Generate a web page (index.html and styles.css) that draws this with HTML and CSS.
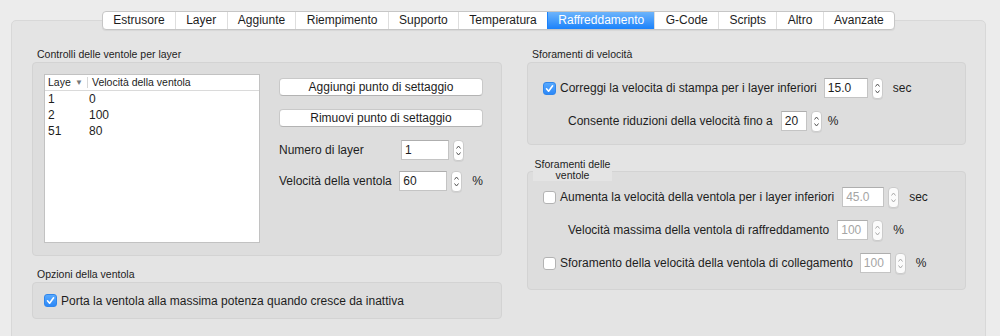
FILE: index.html
```html
<!DOCTYPE html>
<html lang="it">
<head>
    <meta charset="UTF-8">
    <title>Raffreddamento</title>
    <link rel="stylesheet" href="styles.css">
</head>
<body>
    <div class="tabview">
        <!-- Tab strip -->
        <div class="tabbar">
            <div class="tabs">
                <span class="tab">Estrusore</span>
                <span class="tab">Layer</span>
                <span class="tab">Aggiunte</span>
                <span class="tab">Riempimento</span>
                <span class="tab">Supporto</span>
                <span class="tab">Temperatura</span>
                <span class="tab selected">Raffreddamento</span>
                <span class="tab">G-Code</span>
                <span class="tab">Scripts</span>
                <span class="tab">Altro</span>
                <span class="tab">Avanzate</span>
            </div>
        </div>

        <div class="content">
            <!-- Left column -->
            <div class="column">
                <div class="group-title">Controlli delle ventole per layer</div>
                <div class="group fan-layers">
                    <div class="layer-list">
                        <div class="list-head">
                            <div class="col-layer"><span class="clip">Layer</span><span class="sort">&#9660;</span></div>
                            <div class="col-speed">Velocità della ventola</div>
                        </div>
                        <div class="list-row"><span class="cell-layer">1</span><span>0</span></div>
                        <div class="list-row"><span class="cell-layer">2</span><span>100</span></div>
                        <div class="list-row"><span class="cell-layer">51</span><span>80</span></div>
                    </div>

                    <div class="setpoints">
                        <button class="btn">Aggiungi punto di settaggio</button>
                        <button class="btn">Rimuovi punto di settaggio</button>

                        <div class="field-row first">
                            <span class="field-label">Numero di layer</span>
                            <input class="num w48" type="text" value="1">
                            <span class="stepper"><svg width="9" height="19" viewBox="0 0 9 19"><path d="M2.5 7.5 L4.5 5 L6.5 7.5 M2.5 11.5 L4.5 14 L6.5 11.5" fill="none" stroke="#555" stroke-width="1"/></svg></span>
                        </div>
                        <div class="field-row">
                            <span class="field-label">Velocità della ventola</span>
                            <input class="num w48" type="text" value="60">
                            <span class="stepper"><svg width="9" height="19" viewBox="0 0 9 19"><path d="M2.5 7.5 L4.5 5 L6.5 7.5 M2.5 11.5 L4.5 14 L6.5 11.5" fill="none" stroke="#555" stroke-width="1"/></svg></span>
                            <span class="unit">%</span>
                        </div>
                    </div>
                </div>

                <div class="group-title second">Opzioni della ventola</div>
                <div class="group fan-options">
                    <span class="check on"><svg width="13" height="13" viewBox="0 0 13 13"><path d="M3.5 6.8 L5.6 9.2 L9.6 3.8" fill="none" stroke="#fff" stroke-width="1.6" stroke-linecap="round" stroke-linejoin="round"/></svg></span>
                    <span class="check-label">Porta la ventola alla massima potenza quando cresce da inattiva</span>
                </div>
            </div>

            <!-- Right column -->
            <div class="column">
                <div class="group-title">Sforamenti di velocità</div>
                <div class="group speed-box">
                    <div class="row">
                        <span class="check on"><svg width="13" height="13" viewBox="0 0 13 13"><path d="M3.5 6.8 L5.6 9.2 L9.6 3.8" fill="none" stroke="#fff" stroke-width="1.6" stroke-linecap="round" stroke-linejoin="round"/></svg></span>
                        <span class="check-label">Correggi la velocita di stampa per i layer inferiori</span>
                        <input class="num w44" type="text" value="15.0">
                        <span class="stepper"><svg width="9" height="19" viewBox="0 0 9 19"><path d="M2.5 7.5 L4.5 5 L6.5 7.5 M2.5 11.5 L4.5 14 L6.5 11.5" fill="none" stroke="#555" stroke-width="1"/></svg></span>
                        <span class="unit">sec</span>
                    </div>
                    <div class="row">
                        <span class="indent">Consente riduzioni della velocità fino a</span>
                        <input class="num w26 tight" type="text" value="20">
                        <span class="stepper"><svg width="9" height="19" viewBox="0 0 9 19"><path d="M2.5 7.5 L4.5 5 L6.5 7.5 M2.5 11.5 L4.5 14 L6.5 11.5" fill="none" stroke="#555" stroke-width="1"/></svg></span>
                        <span class="unit small-gap">%</span>
                    </div>
                </div>

                <div class="group-title floating">Sforamenti delle ventole</div>
                <div class="group fan-box">
                    <div class="row">
                        <span class="check"></span>
                        <span class="check-label">Aumenta la velocità della ventola per i layer inferiori</span>
                        <input class="num w42 off" type="text" value="45.0">
                        <span class="stepper off"><svg width="9" height="19" viewBox="0 0 9 19"><path d="M2.5 7.5 L4.5 5 L6.5 7.5 M2.5 11.5 L4.5 14 L6.5 11.5" fill="none" stroke="#aaa" stroke-width="1"/></svg></span>
                        <span class="unit">sec</span>
                    </div>
                    <div class="row">
                        <span class="indent">Velocità massima della ventola di raffreddamento</span>
                        <input class="num w31 off" type="text" value="100">
                        <span class="stepper off"><svg width="9" height="19" viewBox="0 0 9 19"><path d="M2.5 7.5 L4.5 5 L6.5 7.5 M2.5 11.5 L4.5 14 L6.5 11.5" fill="none" stroke="#aaa" stroke-width="1"/></svg></span>
                        <span class="unit">%</span>
                    </div>
                    <div class="row">
                        <span class="check"></span>
                        <span class="check-label">Sforamento della velocità della ventola di collegamento</span>
                        <input class="num w31 off" type="text" value="100">
                        <span class="stepper off"><svg width="9" height="19" viewBox="0 0 9 19"><path d="M2.5 7.5 L4.5 5 L6.5 7.5 M2.5 11.5 L4.5 14 L6.5 11.5" fill="none" stroke="#aaa" stroke-width="1"/></svg></span>
                        <span class="unit">%</span>
                    </div>
                </div>
            </div>
        </div>
    </div>
</body>
</html>
```

FILE: styles.css
```css
body {
    margin: 0;
    width: 1000px;
    height: 336px;
    overflow: hidden;
    background-color: #ececec;
    font-family: "Liberation Sans", Arial, sans-serif;
    font-size: 12px;
    color: #1d1d1d;
}

.tabview {
    margin: 20px 14px 0 11px;
    height: 330px;
    box-sizing: border-box;
    background-color: #e4e4e4;
    border: 1px solid #d8d8d8;
    border-radius: 5px;
}

/* tab strip */
.tabbar {
    display: flex;
    justify-content: center;
    margin-top: -10px;
}

.tabs {
    display: flex;
    height: 19px;
    box-sizing: border-box;
    background-color: #fff;
    border: 1px solid #c6c6c6;
    border-radius: 4px;
    box-shadow: 0 1px 1px rgba(0, 0, 0, 0.06);
    overflow: hidden;
}

.tab {
    padding: 0 10.3px;
    line-height: 17px;
    border-left: 1px solid #dedede;
}

.tab:first-child {
    border-left: none;
}

.tab.selected {
    background: linear-gradient(#6db4fb, #1b82fb);
    color: #fff;
    border-left-color: #1b82fb;
}

.content {
    display: grid;
    grid-template-columns: 470px 439px;
    column-gap: 25px;
    padding: 17px 0 0 20px;
}

/* group boxes */
.group-title {
    font-size: 10.5px;
    line-height: 14px;
    padding-left: 5px;
    margin-bottom: 1px;
}

.group-title.second {
    margin-top: 11px;
}

.group-title.floating {
    position: relative;
    z-index: 1;
    width: 79px;
    margin: 14px 0 -10px 6px;
    padding: 0;
    line-height: 11px;
    text-align: center;
    background-color: #e4e4e4;
}

.group {
    box-sizing: border-box;
    background-color: #dddddd;
    border: 1px solid #d3d3d3;
    border-radius: 4px;
}

.fan-layers {
    display: flex;
    height: 194px;
    padding: 11px;
}

.layer-list {
    width: 216px;
    height: 169px;
    box-sizing: border-box;
    background-color: #fff;
    border: 1px solid #c2c2c2;
}

.list-head {
    display: flex;
    height: 15px;
    font-size: 10.5px;
    line-height: 15px;
    border-bottom: 1px solid #dadada;
}

.col-layer {
    display: flex;
    width: 43px;
    padding-left: 3px;
    box-sizing: border-box;
    border-right: 1px solid #d6d6d6;
    margin: 2px 0;
    line-height: 11px;
}

.clip {
    width: 23px;
    overflow: hidden;
    white-space: nowrap;
}

.sort {
    font-size: 8px;
    color: #777;
    margin-left: 4px;
}

.col-speed {
    padding-left: 4px;
}

.list-row {
    display: flex;
    height: 16px;
    line-height: 16px;
}

.cell-layer {
    width: 44px;
    padding-left: 3px;
    box-sizing: border-box;
}

.setpoints {
    width: 204px;
    margin-left: 19px;
    padding-top: 4px;
}

.btn {
    display: block;
    width: 204px;
    height: 18px;
    margin: 0 0 13px;
    padding: 0;
    background-color: #fff;
    border: 1px solid #c9c9c9;
    border-bottom-color: #b3b3b3;
    border-radius: 4px;
    font-family: inherit;
    font-size: 12px;
    color: #1d1d1d;
}

.field-row {
    display: flex;
    align-items: center;
    height: 20px;
    margin-top: 11px;
}

.field-row.first {
    margin-top: 12px;
}

.field-label {
    width: 122px;
}

.num {
    height: 20px;
    box-sizing: border-box;
    padding: 0 3px;
    margin: 0 0 0 7px;
    background-color: #fff;
    border: 1px solid #c4c4c4;
    border-top-color: #aeaeae;
    font-family: inherit;
    font-size: 12px;
    color: #1d1d1d;
    outline: none;
}

.field-row .num {
    margin-left: 0;
}

.num.tight {
    margin-left: 6px;
}

.num.off {
    color: #a5a5a5;
}

.w48 { width: 48px; }
.w44 { width: 44px; }
.w42 { width: 42px; margin-left: 8px; }
.w31 { width: 31px; }
.w26 { width: 26px; }

.stepper {
    display: flex;
    width: 11px;
    height: 21px;
    margin-left: 4px;
    box-sizing: border-box;
    background-color: #fff;
    border: 1px solid #cbcbcb;
    border-radius: 4px;
    box-shadow: 0 1px 0 rgba(0, 0, 0, 0.05);
    justify-content: center;
    align-items: center;
}

.stepper.off {
    background-color: #fbfbfb;
}

.unit {
    margin-left: 10px;
}

.unit.small-gap {
    margin-left: 6px;
}

/* checkbox rows */
.fan-options {
    display: flex;
    align-items: center;
    height: 37px;
    padding: 0 11px;
}

.check {
    display: inline-block;
    width: 13px;
    height: 13px;
    box-sizing: border-box;
    background-color: #fff;
    border: 1px solid #b3b3b3;
    border-radius: 3px;
    flex-shrink: 0;
}

.check.on {
    background: linear-gradient(#58a9fd, #2c88f8);
    border-color: #2f86ec;
}

.check svg {
    display: block;
    margin: -1px;
}

.check-label {
    margin-left: 4px;
    white-space: nowrap;
}

.speed-box {
    height: 83px;
    padding: 15px 0 0 15px;
}

.fan-box {
    height: 119px;
    padding: 15px 0 0 15px;
}

.row {
    display: flex;
    align-items: center;
    height: 20px;
    margin-bottom: 13px;
}

.indent {
    margin-left: 25px;
    white-space: nowrap;
}

.indent + .num {
    margin-left: 8px;
}
```
